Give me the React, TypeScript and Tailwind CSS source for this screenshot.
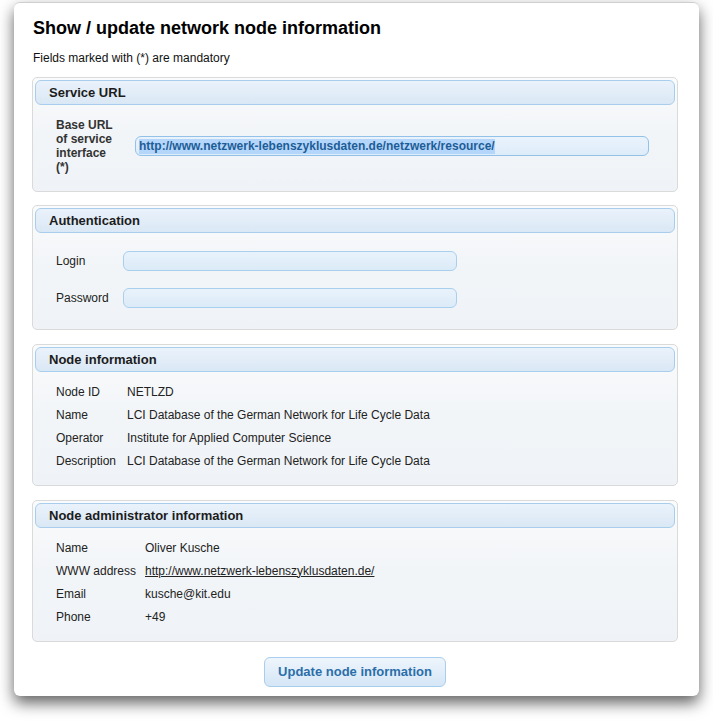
import React from "react";

const font = { fontFamily: '"Liberation Sans", Arial, sans-serif' };

function Legend({ children }: { children: React.ReactNode }) {
  return (
    <div className="h-[25px] rounded-[6px] border border-[#a9cdec] bg-gradient-to-b from-[#eaf2fb] to-[#dae8f5] pl-[13px] flex items-center text-[13px] font-bold text-[#1c1c1c]">
      {children}
    </div>
  );
}

function Fieldset({ children, className = "" }: { children: React.ReactNode; className?: string }) {
  return (
    <div className={"rounded-[5px] border border-[#dadada] bg-gradient-to-b from-[#fafbfc] via-[#f2f5f8] to-[#eff3f7] p-[2px] " + className}>
      {children}
    </div>
  );
}

function InfoRow({ label, value, w }: { label: string; value: React.ReactNode; w: string }) {
  return (
    <div className="flex items-center h-[23px] text-[12px] text-[#222]">
      <div className={w}>{label}</div>
      <div>{value}</div>
    </div>
  );
}

export default function App() {
  return (
    <div className="w-[713px] h-[721px] bg-white pl-[14px] pt-[2px]" style={font}>
      <div className="w-[685px] h-[694px] bg-white rounded-[6px] border-t border-[#cfcfcf] shadow-[0_7px_15px_rgba(0,0,0,0.62)] pl-[18px] pr-[21px] pt-[14px]">
        <h1 className="text-[18px] font-bold text-black leading-[22px] ml-[1px]">
          Show / update network node information
        </h1>
        <p className="text-[12px] text-[#111] mt-[12px] leading-[14px] ml-[1px]">
          Fields marked with (*) are mandatory
        </p>

        <Fieldset className="mt-[12px] h-[115px]">
          <Legend>Service URL</Legend>
          <div className="flex items-center pl-[21px] pt-[13px]">
            <div className="w-[64px] text-[12px] font-bold text-[#333] leading-[14px]">
              Base URL of service interface (*)
            </div>
            <div className="ml-[15px] w-[514px] h-[20px] rounded-[6px] border border-[#92c2ea] bg-gradient-to-b from-[#eaf3fc] to-[#deecf9] flex items-center pl-[3px] text-[12px] font-bold text-[#1d5d97]">
              <span className="bg-[#b4d6fa] leading-[15px]">http://www.netzwerk-lebenszyklusdaten.de/netzwerk/resource/</span>
            </div>
          </div>
        </Fieldset>

        <Fieldset className="mt-[13px] h-[125px]">
          <Legend>Authentication</Legend>
          <div className="pl-[21px] pt-[18px] flex flex-col gap-[17px]">
            <div className="flex items-center">
              <div className="w-[67px] text-[12px] text-[#222]">Login</div>
              <div className="w-[334px] h-[20px] rounded-[6px] border border-[#a9cfee] bg-gradient-to-b from-[#e8f2fb] to-[#dcebf8]" />
            </div>
            <div className="flex items-center">
              <div className="w-[67px] text-[12px] text-[#222]">Password</div>
              <div className="w-[334px] h-[20px] rounded-[6px] border border-[#a9cfee] bg-gradient-to-b from-[#e8f2fb] to-[#dcebf8]" />
            </div>
          </div>
        </Fieldset>

        <Fieldset className="mt-[14px] h-[142px]">
          <Legend>Node information</Legend>
          <div className="pl-[21px] pt-[8px]">
            <InfoRow w="w-[71px]" label="Node ID" value="NETLZD" />
            <InfoRow w="w-[71px]" label="Name" value="LCI Database of the German Network for Life Cycle Data" />
            <InfoRow w="w-[71px]" label="Operator" value="Institute for Applied Computer Science" />
            <InfoRow w="w-[71px]" label="Description" value="LCI Database of the German Network for Life Cycle Data" />
          </div>
        </Fieldset>

        <Fieldset className="mt-[14px] h-[142px]">
          <Legend>Node administrator information</Legend>
          <div className="pl-[21px] pt-[8px]">
            <InfoRow w="w-[89px]" label="Name" value="Oliver Kusche" />
            <InfoRow
              w="w-[89px]"
              label="WWW address"
              value={<span className="underline">http://www.netzwerk-lebenszyklusdaten.de/</span>}
            />
            <InfoRow w="w-[89px]" label="Email" value="kusche@kit.edu" />
            <InfoRow w="w-[89px]" label="Phone" value="+49" />
          </div>
        </Fieldset>

        <div className="flex justify-center mt-[15px]">
          <button className="w-[182px] h-[30px] rounded-[6px] border border-[#a9cdec] bg-gradient-to-b from-[#eef5fc] to-[#d5e6f6] text-[13px] font-bold text-[#2b6ea9]">
            Update node information
          </button>
        </div>
      </div>
    </div>
  );
}
